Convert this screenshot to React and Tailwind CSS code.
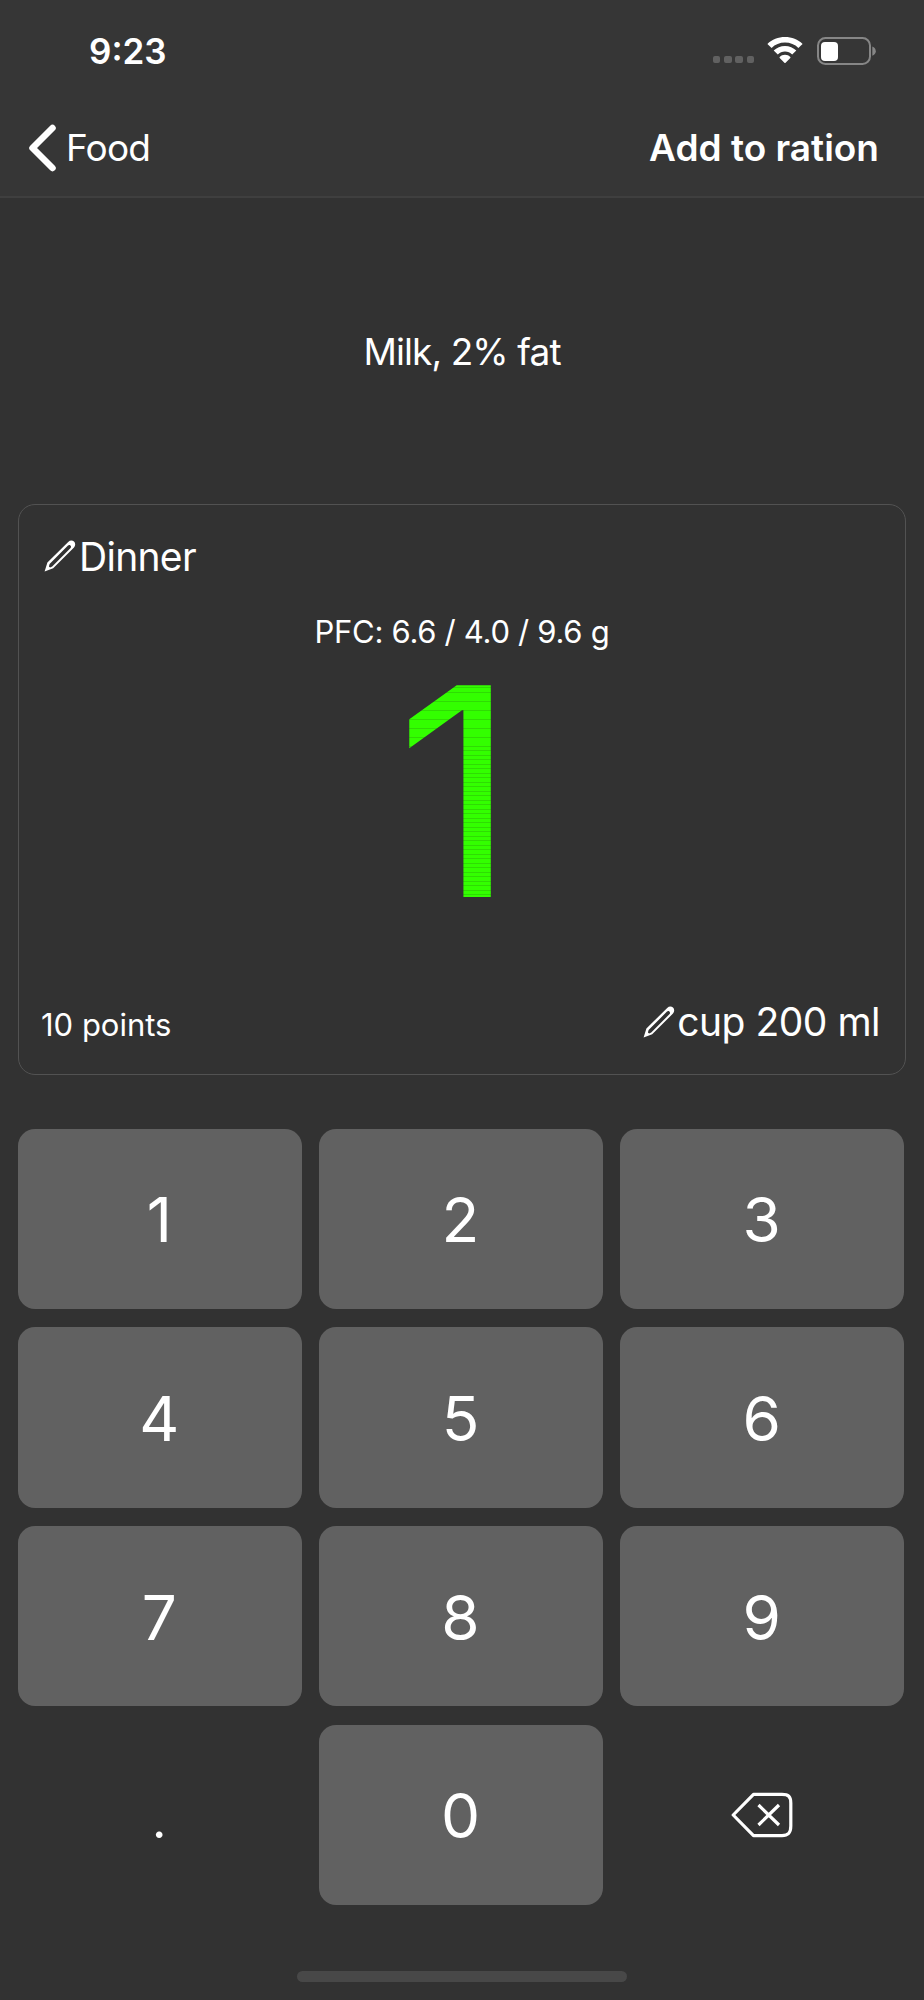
import React from 'react';

const digitRows = [
  ['1', '2', '3'],
  ['4', '5', '6'],
  ['7', '8', '9']
];

const PencilIcon = ({ className }) => (
  <svg className={className} viewBox="0 0 32 32" fill="none">
    <path
      d="M0.6 31.4 L3.4 22.6 L24.2 1.9 C26 0.2 28.4 0 30 1.6 C31.6 3.2 31.6 5.8 30 7.5 L9.2 28.3 Z M5.6 24 L4.9 26.6 L6.1 27.4 L8.2 26.6 L26.6 8 C27.3 7.2 27.1 6.2 26.4 5.5 C25.6 4.7 24.8 4.9 24 5.6 Z"
      fill="#fff"
      fillRule="evenodd"
    />
  </svg>
);

const WifiIcon = () => (
  <svg className="w-9 h-[27px]" viewBox="0 0 36 27">
    <path
      d="M18 5.6C23.2 5.6 27.9 7.6 31.4 11L33.7 8.8L35.6 6.9C31 2.6 24.8 0 18 0S5 2.6 0.4 6.9L4.6 11C8.1 7.6 12.8 5.6 18 5.6Z"
      fill="#fff"
    />
    <path
      d="M18 14.6C20.8 14.6 23.3 15.7 25.2 17.6L29.3 13.5C26.4 10.6 22.4 8.9 18 8.9S9.6 10.6 6.7 13.5L10.8 17.6C12.7 15.7 15.2 14.6 18 14.6Z"
      fill="#fff"
    />
    <path
      d="M18 17.8C15.9 17.8 14.1 18.6 12.7 19.9C12.4 20.2 12.4 20.6 12.7 20.9L17.4 25.8C17.8 26.1 18.2 26.1 18.6 25.8L23.3 20.9C23.6 20.6 23.6 20.2 23.3 19.9C21.9 18.6 20.1 17.8 18 17.8Z"
      fill="#fff"
    />
  </svg>
);

const BatteryIcon = () => (
  <svg className="w-[59px] h-7" viewBox="0 0 59 28">
    <rect x="1" y="1" width="52" height="26" rx="7.5" fill="none" stroke="#868686" strokeWidth="2" />
    <rect x="4" y="5" width="17" height="19" rx="4" fill="#fff" />
    <path d="M55.3 9.5C57.4 10.3 58.8 12 58.8 14.2S57.4 18 55.3 18.8Z" fill="#868686" />
  </svg>
);

const BackspaceIcon = () => (
  <svg className="w-[62px] h-[46px] mt-px" viewBox="0 0 62 46" fill="none" stroke="#fff">
    <path
      d="M22.5 2.4H51C57.5 2.4 59.8 4.5 59.8 11V34C59.8 41 57.5 43.6 51 43.6H22.5L2.2 23Z"
      strokeWidth="3.2"
      strokeLinejoin="round"
    />
    <path d="M27.5 13L48 33M48 13L27.5 33" strokeWidth="3.2" />
  </svg>
);

const DigitKey = ({ label }) => (
  <button className="h-[180.5px] rounded-[17px] bg-[#616161] flex items-center justify-center text-[62px] leading-none pt-[3px] pr-px">
    {label}
  </button>
);

const App = () => {
  return (
    <div className="w-[924px] h-[2000px] bg-[#323232] text-white font-['Inter',sans-serif] flex flex-col overflow-hidden">
      {/* Header */}
      <header className="h-[198px] shrink-0 bg-[#363636] border-b-2 border-[#3f3f3f]">
        <div className="h-[101px] flex items-center justify-between pl-[89px] pr-[48px]">
          <span className="text-[35px] leading-none font-semibold pt-0.5">9:23</span>
          <div className="flex items-center">
            <div className="flex gap-[3.7px] mt-[18px] mr-[13px]">
              {[0, 1, 2, 3].map((dot) => (
                <span key={dot} className="w-[7.5px] h-[7.5px] rounded-[2px] bg-[#616161]" />
              ))}
            </div>
            <WifiIcon />
            <div className="ml-[14px]">
              <BatteryIcon />
            </div>
          </div>
        </div>
        <nav className="h-[93px] flex items-center justify-between pl-7 pr-[45px]">
          <div className="flex items-center">
            <svg className="w-7 h-[48px]" viewBox="0 0 28 48" fill="none">
              <path d="M24.5 4L4.5 24L24.5 44" stroke="#fff" strokeWidth="6.5" strokeLinecap="round" strokeLinejoin="round" />
            </svg>
            <span className="ml-[10px] text-[37px] leading-none tracking-[-0.8px]">Food</span>
          </div>
          <span className="text-[37px] leading-none font-semibold">Add to ration</span>
        </nav>
      </header>

      {/* Product name */}
      <h1 className="h-[306px] shrink-0 flex items-center justify-center text-[37px] leading-none tracking-[-0.9px]">
        Milk, 2% fat
      </h1>

      {/* Portion card */}
      <section className="h-[571px] shrink-0 mx-[18px] rounded-[17px] border border-[#525252] flex flex-col">
        <div className="h-[102px] flex items-center pl-[25px]">
          <PencilIcon className="w-8 h-8" />
          <span className="ml-[3px] text-[39px] leading-none tracking-[-0.7px]">Dinner</span>
        </div>
        <p className="h-[49px] flex items-center justify-center text-[31px] leading-none tracking-[-0.3px]">
          PFC: 6.6 / 4.0 / 9.6 g
        </p>
        <div className="h-[270px] flex items-center justify-center pt-px pr-[11px]">
          <span className="text-[291px] leading-[0.8] scale-x-[1.03] bg-[repeating-linear-gradient(to_bottom,#33ff00_0px,#33ff00_3.5px,#2fdc04_3.5px,#2fdc04_4.5px)] bg-clip-text text-transparent">
            1
          </span>
        </div>
        <div className="h-[148px] flex items-center justify-between pl-[22px] pr-[25px] pt-[43px]">
          <span className="text-[31px] leading-none pt-1.5">10 points</span>
          <div className="flex items-center">
            <PencilIcon className="w-8 h-8 mt-px" />
            <span className="ml-[2px] text-[39px] leading-none tracking-[-0.5px]">cup 200 ml</span>
          </div>
        </div>
      </section>

      {/* Keypad */}
      <div className="mt-[53.5px] pl-[18px] pr-5 grid grid-cols-3 gap-x-[17.6px] gap-y-[18.2px]">
        {digitRows.flat().map((digit) => (
          <DigitKey key={digit} label={digit} />
        ))}
        <button className="flex items-center justify-center text-[50px] leading-none pt-[11px] pr-px">.</button>
        <DigitKey label="0" />
        <button className="flex items-center justify-center">
          <BackspaceIcon />
        </button>
      </div>

      {/* Home indicator */}
      <div className="mt-auto mb-[18px] mx-auto w-[330px] h-[11px] shrink-0 rounded-full bg-[#484848]" />
    </div>
  );
};

export default App;
